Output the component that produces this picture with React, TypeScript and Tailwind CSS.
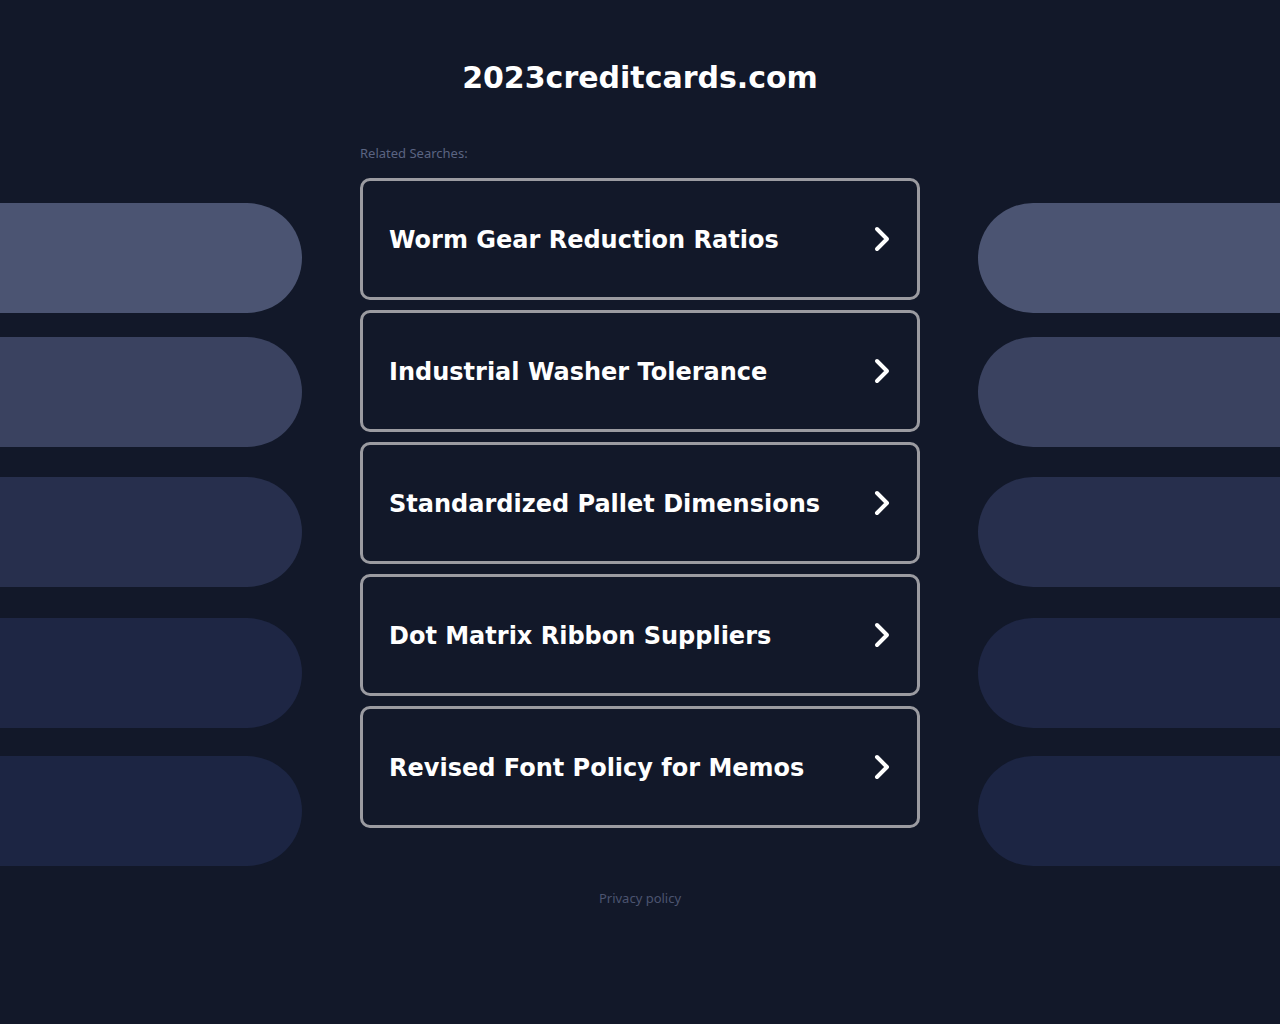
import React from "react";

const items = [
  "Worm Gear Reduction Ratios",
  "Industrial Washer Tolerance",
  "Standardized Pallet Dimensions",
  "Dot Matrix Ribbon Suppliers",
  "Revised Font Policy for Memos",
];

function Chevron() {
  return (
    <svg width="20" height="28" viewBox="0 0 20 28" fill="none">
      <polyline points="5,4 15,14 5,24" stroke="#ffffff" strokeWidth="4" strokeLinecap="round" strokeLinejoin="round" />
    </svg>
  );
}

function SideColumn({ side }: { side: "left" | "right" }) {
  const r = side === "left" ? "rounded-r-[55px]" : "rounded-l-[55px]";
  return (
    <div className="w-[302px] pt-[58px] flex flex-col">
      <div className={`h-[110px] bg-[#4b5472] ${r}`} />
      <div className={`h-[110px] mt-[24px] bg-[#3a4260] ${r}`} />
      <div className={`h-[110px] mt-[30px] bg-[#272f4d] ${r}`} />
      <div className={`h-[110px] mt-[31px] bg-[#1e2644] ${r}`} />
      <div className={`h-[110px] mt-[28px] bg-[#1c2543] ${r}`} />
    </div>
  );
}

export default function App() {
  return (
    <div className="min-h-screen w-full bg-[#121829]" style={{ fontFamily: '"DejaVu Sans", sans-serif' }}>
      <h1 className="pt-[60px] text-center text-[30px] leading-[36px] font-bold text-white">2023creditcards.com</h1>
      <div className="mt-[49px] flex justify-between">
        <SideColumn side="left" />
        <div className="w-[560px] flex flex-col">
          <div className="h-[16px] text-[13px] leading-[16px] text-[#5b6482]" style={{ fontFamily: '"Noto Sans", sans-serif' }}>
            Related Searches:
          </div>
          <div className="mt-[17px] flex flex-col gap-[10px]">
            {items.map((t) => (
              <a
                key={t}
                href="#"
                className="h-[122px] flex items-center justify-between border-[3px] border-[#9b9ba1] rounded-[10px] pl-[26px] pr-[25px] bg-[#121829]"
              >
                <span className="pt-[2px] text-white font-bold text-[24px] leading-[30px]">{t}</span>
                <Chevron />
              </a>
            ))}
          </div>
        </div>
        <SideColumn side="right" />
      </div>
      <div className="mt-[24px] text-center text-[13px] leading-[16px] text-[#4c5470]" style={{ fontFamily: '"Noto Sans", sans-serif' }}>
        Privacy policy
      </div>
    </div>
  );
}
